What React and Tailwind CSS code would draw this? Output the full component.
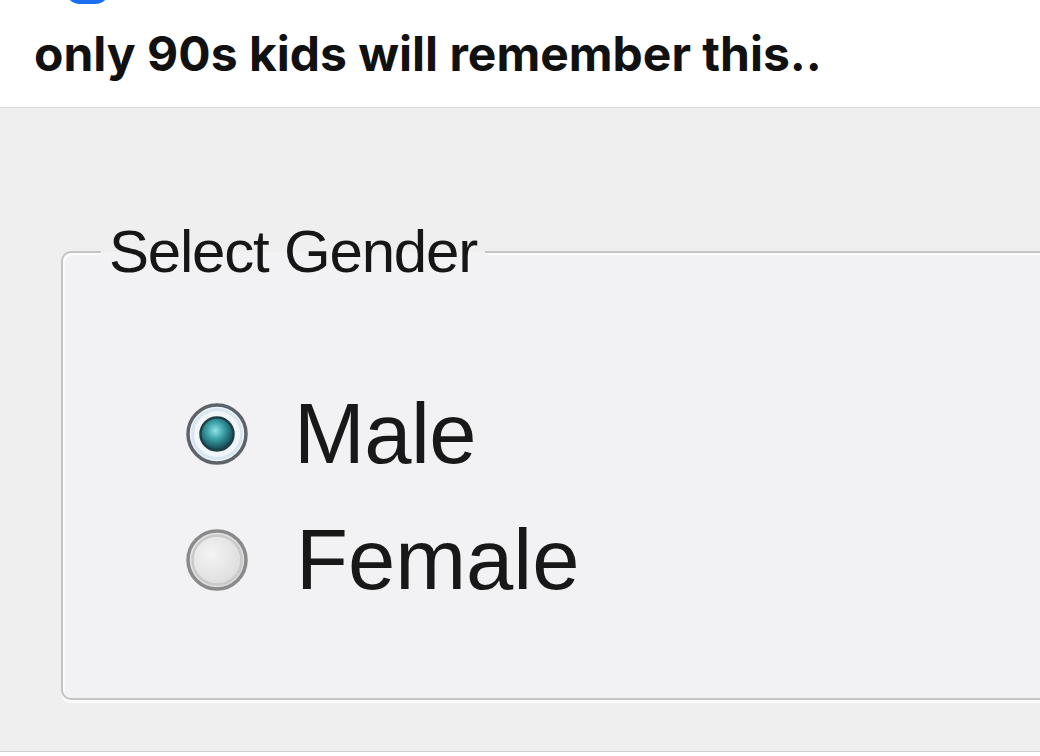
import React from 'react';

const MaleRadio = () => (
    <svg width="64" height="64" viewBox="0 0 64 64">
        <defs>
            <radialGradient id="dot" cx="45%" cy="40%" r="60%">
                <stop offset="0%" stopColor="#8fe3e6" />
                <stop offset="45%" stopColor="#3a9ea6" />
                <stop offset="100%" stopColor="#10414c" />
            </radialGradient>
        </defs>
        <circle cx="32" cy="32" r="29" fill="#f3f6f8" stroke="#5d636a" strokeWidth="3.5" />
        <circle cx="32" cy="32" r="24.5" fill="none" stroke="#d6e7f1" strokeWidth="3" />
        <circle cx="32" cy="32" r="16.5" fill="url(#dot)" stroke="#1d3f49" strokeWidth="2.5" />
    </svg>
);

const EmptyRadio = () => (
    <svg width="64" height="64" viewBox="0 0 64 64">
        <defs>
            <radialGradient id="empty" cx="40%" cy="40%" r="65%">
                <stop offset="0%" stopColor="#f4f4f4" />
                <stop offset="100%" stopColor="#d9d9d9" />
            </radialGradient>
        </defs>
        <circle cx="32" cy="32" r="29" fill="url(#empty)" stroke="#8a8a8a" strokeWidth="3.5" />
        <circle cx="32" cy="32" r="24.5" fill="none" stroke="#c9c9c9" strokeWidth="2.5" />
    </svg>
);

const App = () => {
    return (
        <div className="w-[1040px] h-[756px] bg-white overflow-hidden">
            {/* Post header */}
            <div className="h-[108px] bg-white border-b border-[#d8d8d8]">
                <div className="h-1 overflow-hidden pl-[65px]">
                    <div className="w-[45px] h-[30px] -mt-[26px] rounded-full bg-[#1a6ff0]" />
                </div>
                <p className="pl-[34px] pt-[22px] text-[48px] leading-[56px] font-bold text-[#111] tracking-[0px] font-['Inter','Liberation_Sans',sans-serif]">
                    only 90s kids will remember this..
                </p>
            </div>

            {/* Old-school dialog */}
            <div className="h-[644px] bg-[#efefef] border-b border-[#cfcfcf] pt-[143px] font-['Liberation_Sans',Arial,sans-serif]">
                <div className="relative ml-[61px] h-[449px] rounded-l-[10px] border-2 border-r-0 border-[#c4c4c4] bg-[#f2f1f3] shadow-[inset_2px_2px_0_#fbfbfb,0_3px_0_#fbfbfb]">
                    <div className="absolute left-[38px] -top-[37px] px-[8px] bg-[linear-gradient(#efefef_50%,#f2f1f3_50%)] text-[60px] leading-[72px] tracking-[-1.2px] text-[#161616]">
                        Select Gender
                    </div>
                    <div className="flex flex-col pt-[118px] pl-[122px]">
                        <label className="flex items-center h-[126px] gap-[45px]">
                            <MaleRadio />
                            <span className="text-[85px] leading-[126px] tracking-[-0.6px] text-[#181818]">Male</span>
                        </label>
                        <label className="flex items-center h-[126px] gap-[47px]">
                            <EmptyRadio />
                            <span className="text-[85px] leading-[126px] tracking-[0px] text-[#181818]">Female</span>
                        </label>
                    </div>
                </div>
            </div>
        </div>
    );
};

export default App;
